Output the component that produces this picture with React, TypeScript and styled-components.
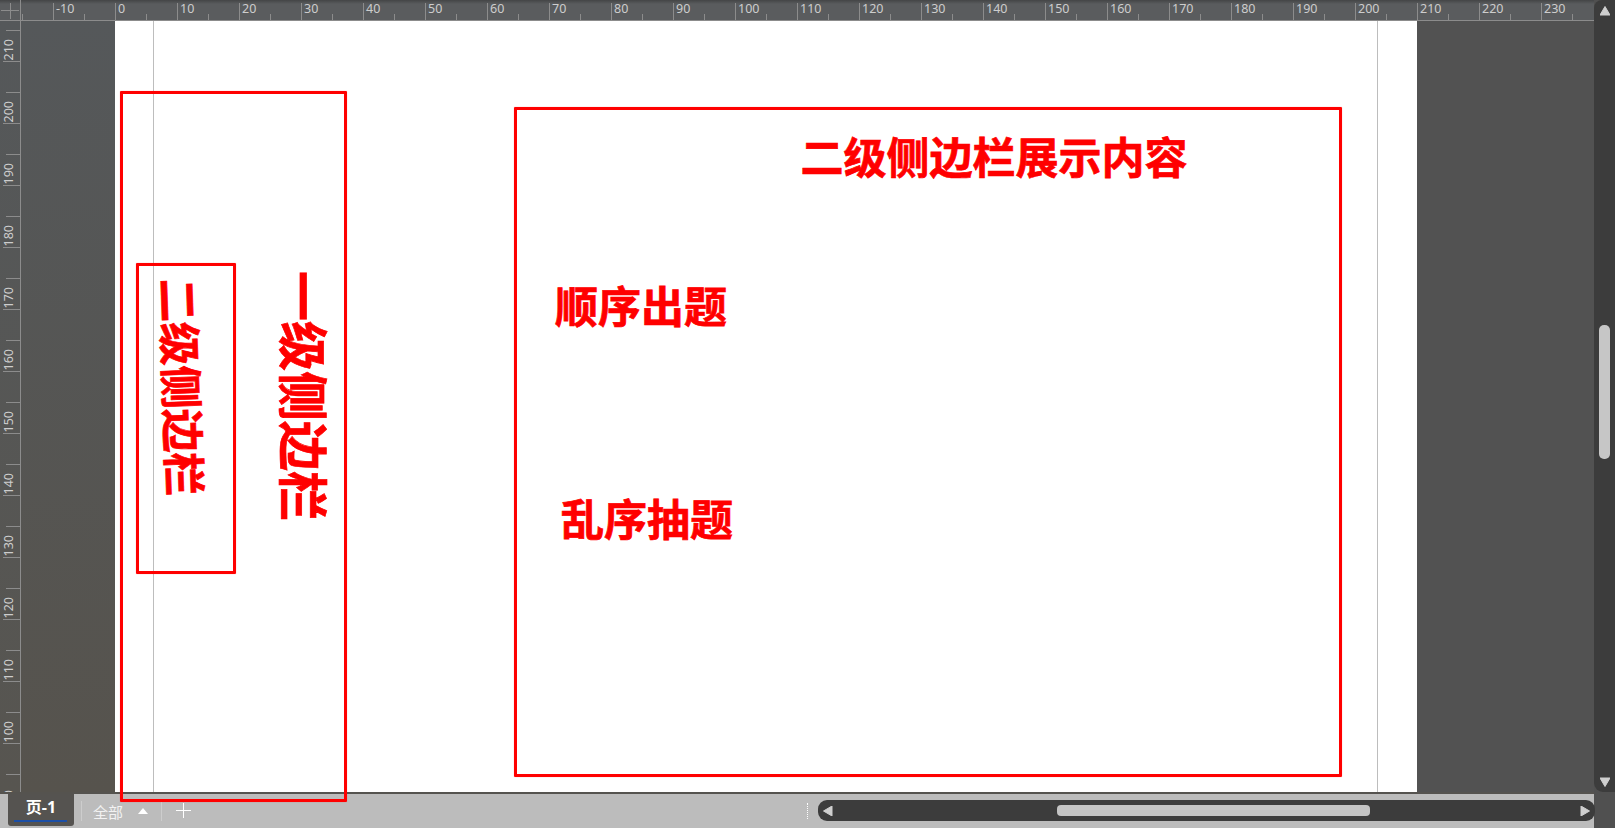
import styled, { createGlobalStyle } from 'styled-components';

const GlobalStyle = createGlobalStyle`
  html, body { margin: 0; padding: 0; height: 100%; overflow: hidden; }
  #root { height: 100%; }
`;

const Shell = styled.div`
  display: flex;
  width: 1615px;
  height: 828px;
  overflow: hidden;
  background: #505050;
  font-family: 'Noto Sans', 'Noto Sans CJK SC', sans-serif;
`;

const Main = styled.div`
  flex: 1;
  min-width: 0;
  display: flex;
  flex-direction: column;
`;

const TopBar = styled.div`
  display: flex;
  flex: none;
  height: 21px;
  box-sizing: border-box;
  border-bottom: 1px solid #8c8c8c;
  background: linear-gradient(180deg, #444546 0, #5a5c5e 4px, #5a5c5e 100%);
  overflow: hidden;
`;

const Corner = styled.div`
  position: relative;
  flex: none;
  width: 21px;
  box-sizing: border-box;
  border-right: 1px solid #8c8c8c;

  &::before { content: ''; position: absolute; left: 1px; right: 1px; top: 10px; height: 1px; background: #8c8c8c; }
  &::after { content: ''; position: absolute; left: 10px; top: 3px; bottom: 1px; width: 1px; background: #8c8c8c; }
`;

const HTrack = styled.div`
  display: flex;
  flex: 1;
  min-width: 0;
  margin-left: -30px;
`;

const HCell = styled.div`
  position: relative;
  flex: none;
  width: 62px;
  box-sizing: border-box;
  border-left: 1px solid #8c8c8c;
  margin-top: 3px;
  padding-left: 2px;
  font-size: 12.5px;
  line-height: 12px;
  color: #cdcdcd;

  &::after {
    content: '';
    position: absolute;
    left: 30px;
    bottom: 0;
    width: 1px;
    height: 6px;
    background: #8c8c8c;
  }
`;

const Body = styled.div`
  position: relative;
  flex: 1;
  min-height: 0;
  display: flex;
  border-bottom: 2px solid #55534f;
`;

const VRuler = styled.div`
  flex: none;
  width: 21px;
  box-sizing: border-box;
  border-right: 1px solid #8c8c8c;
  background: linear-gradient(180deg, #55585a, #575550);
  overflow: hidden;
`;

const VTrack = styled.div`
  margin-top: -21px;
`;

const VCell = styled.div`
  position: relative;
  height: 62px;
  box-sizing: border-box;
  border-bottom: 1px solid #8c8c8c;
  margin-left: 3px;
  display: flex;
  align-items: flex-end;
  padding-bottom: 1px;

  &::after {
    content: '';
    position: absolute;
    left: 3px;
    right: 0;
    top: 30px;
    height: 1px;
    background: #8c8c8c;
  }
`;

const VLabel = styled.span`
  writing-mode: vertical-rl;
  transform: rotate(180deg);
  font-size: 12.5px;
  line-height: 11px;
  color: #cdcdcd;
`;

const Gutter = styled.div<{ $side: 'left' | 'right' }>`
  flex: ${(p) => (p.$side === 'left' ? '0 0 94px' : '1')};
  background: ${(p) =>
    p.$side === 'left' ? 'linear-gradient(180deg, #55585a, #56534d)' : '#525252'};
`;

const Page = styled.div`
  position: relative;
  flex: 0 0 1302px;
  background: #ffffff;
  z-index: 2;
`;

const Guide = styled.div<{ $x: number }>`
  position: absolute;
  top: 0;
  bottom: 0;
  left: ${(p) => p.$x}px;
  width: 1px;
  background: #bdbdbd;
`;

const Frame = styled.div<{ $x: number; $y: number; $w: number; $h: number }>`
  position: absolute;
  left: ${(p) => p.$x}px;
  top: ${(p) => p.$y}px;
  width: ${(p) => p.$w}px;
  height: ${(p) => p.$h}px;
  box-sizing: border-box;
  border: 3px solid #ff0000;
  border-radius: 1px;
  box-shadow: 0 0 1px rgba(255, 0, 0, 0.5);
`;

const Note = styled.div<{ $x: number; $y: number; $size: number; $turn?: number }>`
  position: absolute;
  left: ${(p) => p.$x}px;
  top: ${(p) => p.$y}px;
  transform: translate(-50%, -50%) rotate(${(p) => p.$turn ?? 0}deg);
  font-family: 'Noto Sans CJK SC', sans-serif;
  font-size: ${(p) => p.$size}px;
  font-weight: 700;
  line-height: 1;
  white-space: nowrap;
  color: #ff0000;
  -webkit-text-stroke: 0.7px #ff0000;
`;

const StatusBar = styled.div`
  flex: none;
  height: 34px;
  display: flex;
  align-items: flex-start;
  padding-left: 8px;
  background: #bcbcbc;
`;

const SheetTab = styled.div`
  position: relative;
  flex: none;
  width: 66px;
  height: 32px;
  box-sizing: border-box;
  text-align: center;
  font-size: 16px;
  line-height: 26px;
  font-weight: 700;
  color: #ffffff;
  background: #555350;
  border-radius: 0 0 3px 3px;

  &::after {
    content: '';
    position: absolute;
    left: 6px;
    right: 7px;
    bottom: 4px;
    height: 2px;
    background: #1c4fa6;
  }
`;

const Divider = styled.div<{ $gap?: number }>`
  flex: none;
  width: 1px;
  height: 20px;
  margin: 7px 0 0 ${(p) => p.$gap ?? 0}px;
  background: #cdcdcd;
`;

const AllPages = styled.div`
  display: flex;
  flex: none;
  align-items: center;
  gap: 15px;
  height: 24px;
  margin-top: 5px;
  padding: 0 13px 0 11px;
  font-size: 15px;
  color: #f2f2f2;
`;

const PlusButton = styled.div`
  display: flex;
  flex: none;
  margin: 9px 0 0 14px;
  color: #ffffff;
`;

const Grip = styled.div`
  flex: none;
  width: 0;
  height: 16px;
  margin: 9px 0 0 616px;
  border-left: 1px dotted #ffffff;
`;

const HScroll = styled.div`
  flex: none;
  display: flex;
  align-items: center;
  justify-content: space-between;
  width: 777px;
  height: 21px;
  box-sizing: border-box;
  margin: 6px 0 0 10px;
  padding: 0 5px;
  border-radius: 9px;
  background: #3c3c3c;
`;

const HThumb = styled.div`
  width: 313px;
  height: 11px;
  margin-left: 14px;
  border-radius: 4px;
  background: #c4c4c4;
`;

const VScroll = styled.div`
  flex: none;
  width: 21px;
  height: 792px;
  box-sizing: border-box;
  padding: 6px 0 5px;
  display: flex;
  flex-direction: column;
  align-items: center;
  border-radius: 8px 0 0 9px;
  background: #3c3c3c;
`;

const VThumb = styled.div`
  width: 11px;
  height: 134px;
  margin-top: 309px;
  margin-bottom: auto;
  border-radius: 5px;
  background: #c6c6c6;
`;

const HORIZONTAL = Array.from({ length: 26 }, (_, i) => (i - 2) * 10);
const VERTICAL = Array.from({ length: 13 }, (_, i) => 210 - i * 10);

function Arrow({ dir }: { dir: 'up' | 'down' | 'left' | 'right' }) {
  const points = {
    up: '5,0.5 10,9 0,9',
    down: '0,1 10,1 5,9.5',
    left: '9,0 9,10 0.5,5',
    right: '1,0 1,10 9.5,5',
  }[dir];
  return (
    <svg width="10" height="10" viewBox="0 0 10 10" style={{ flex: 'none' }}>
      <polygon points={points} fill="#cfcfcf" stroke="#cfcfcf" strokeLinejoin="round" />
    </svg>
  );
}

export default function App() {
  return (
    <>
      <GlobalStyle />
      <Shell>
        <Main>
          <TopBar>
            <Corner />
            <HTrack>
              {HORIZONTAL.map((n) => (
                <HCell key={n}>{n >= -10 ? n : ''}</HCell>
              ))}
            </HTrack>
          </TopBar>
          <Body>
            <VRuler>
              <VTrack>
                {VERTICAL.map((n) => (
                  <VCell key={n}>
                    <VLabel>{n}</VLabel>
                  </VCell>
                ))}
              </VTrack>
            </VRuler>
            <Gutter $side="left" />
            <Page>
              <Guide $x={38} />
              <Guide $x={1262} />
              <Frame $x={5} $y={70} $w={227} $h={711} />
              <Frame $x={21} $y={242} $w={100} $h={311} />
              <Frame $x={399} $y={86} $w={828} $h={670} />
              <Note $x={879} $y={134} $size={43}>二级侧边栏展示内容</Note>
              <Note $x={526} $y={283} $size={43}>顺序出题</Note>
              <Note $x={532} $y={496} $size={43}>乱序抽题</Note>
              <Note $x={191} $y={375} $size={50} $turn={90}>一级侧边栏</Note>
              <Note $x={68} $y={366} $size={43.5} $turn={88}>二级侧边栏</Note>
            </Page>
            <Gutter $side="right" />
          </Body>
          <StatusBar>
            <SheetTab>页-1</SheetTab>
            <Divider $gap={7} />
            <AllPages>
              全部
              <svg width="10" height="6" viewBox="0 0 10 6" style={{ flex: 'none' }}>
                <polygon points="5,0 10,6 0,6" fill="#ffffff" />
              </svg>
            </AllPages>
            <Divider />
            <PlusButton>
              <svg width="15" height="15" viewBox="0 0 15 15">
                <path d="M7.5 0v15M0 7.5h15" stroke="currentColor" strokeWidth="1" fill="none" />
              </svg>
            </PlusButton>
            <Grip />
            <HScroll>
              <Arrow dir="left" />
              <HThumb />
              <Arrow dir="right" />
            </HScroll>
          </StatusBar>
        </Main>
        <VScroll>
          <Arrow dir="up" />
          <VThumb />
          <Arrow dir="down" />
        </VScroll>
      </Shell>
    </>
  );
}
